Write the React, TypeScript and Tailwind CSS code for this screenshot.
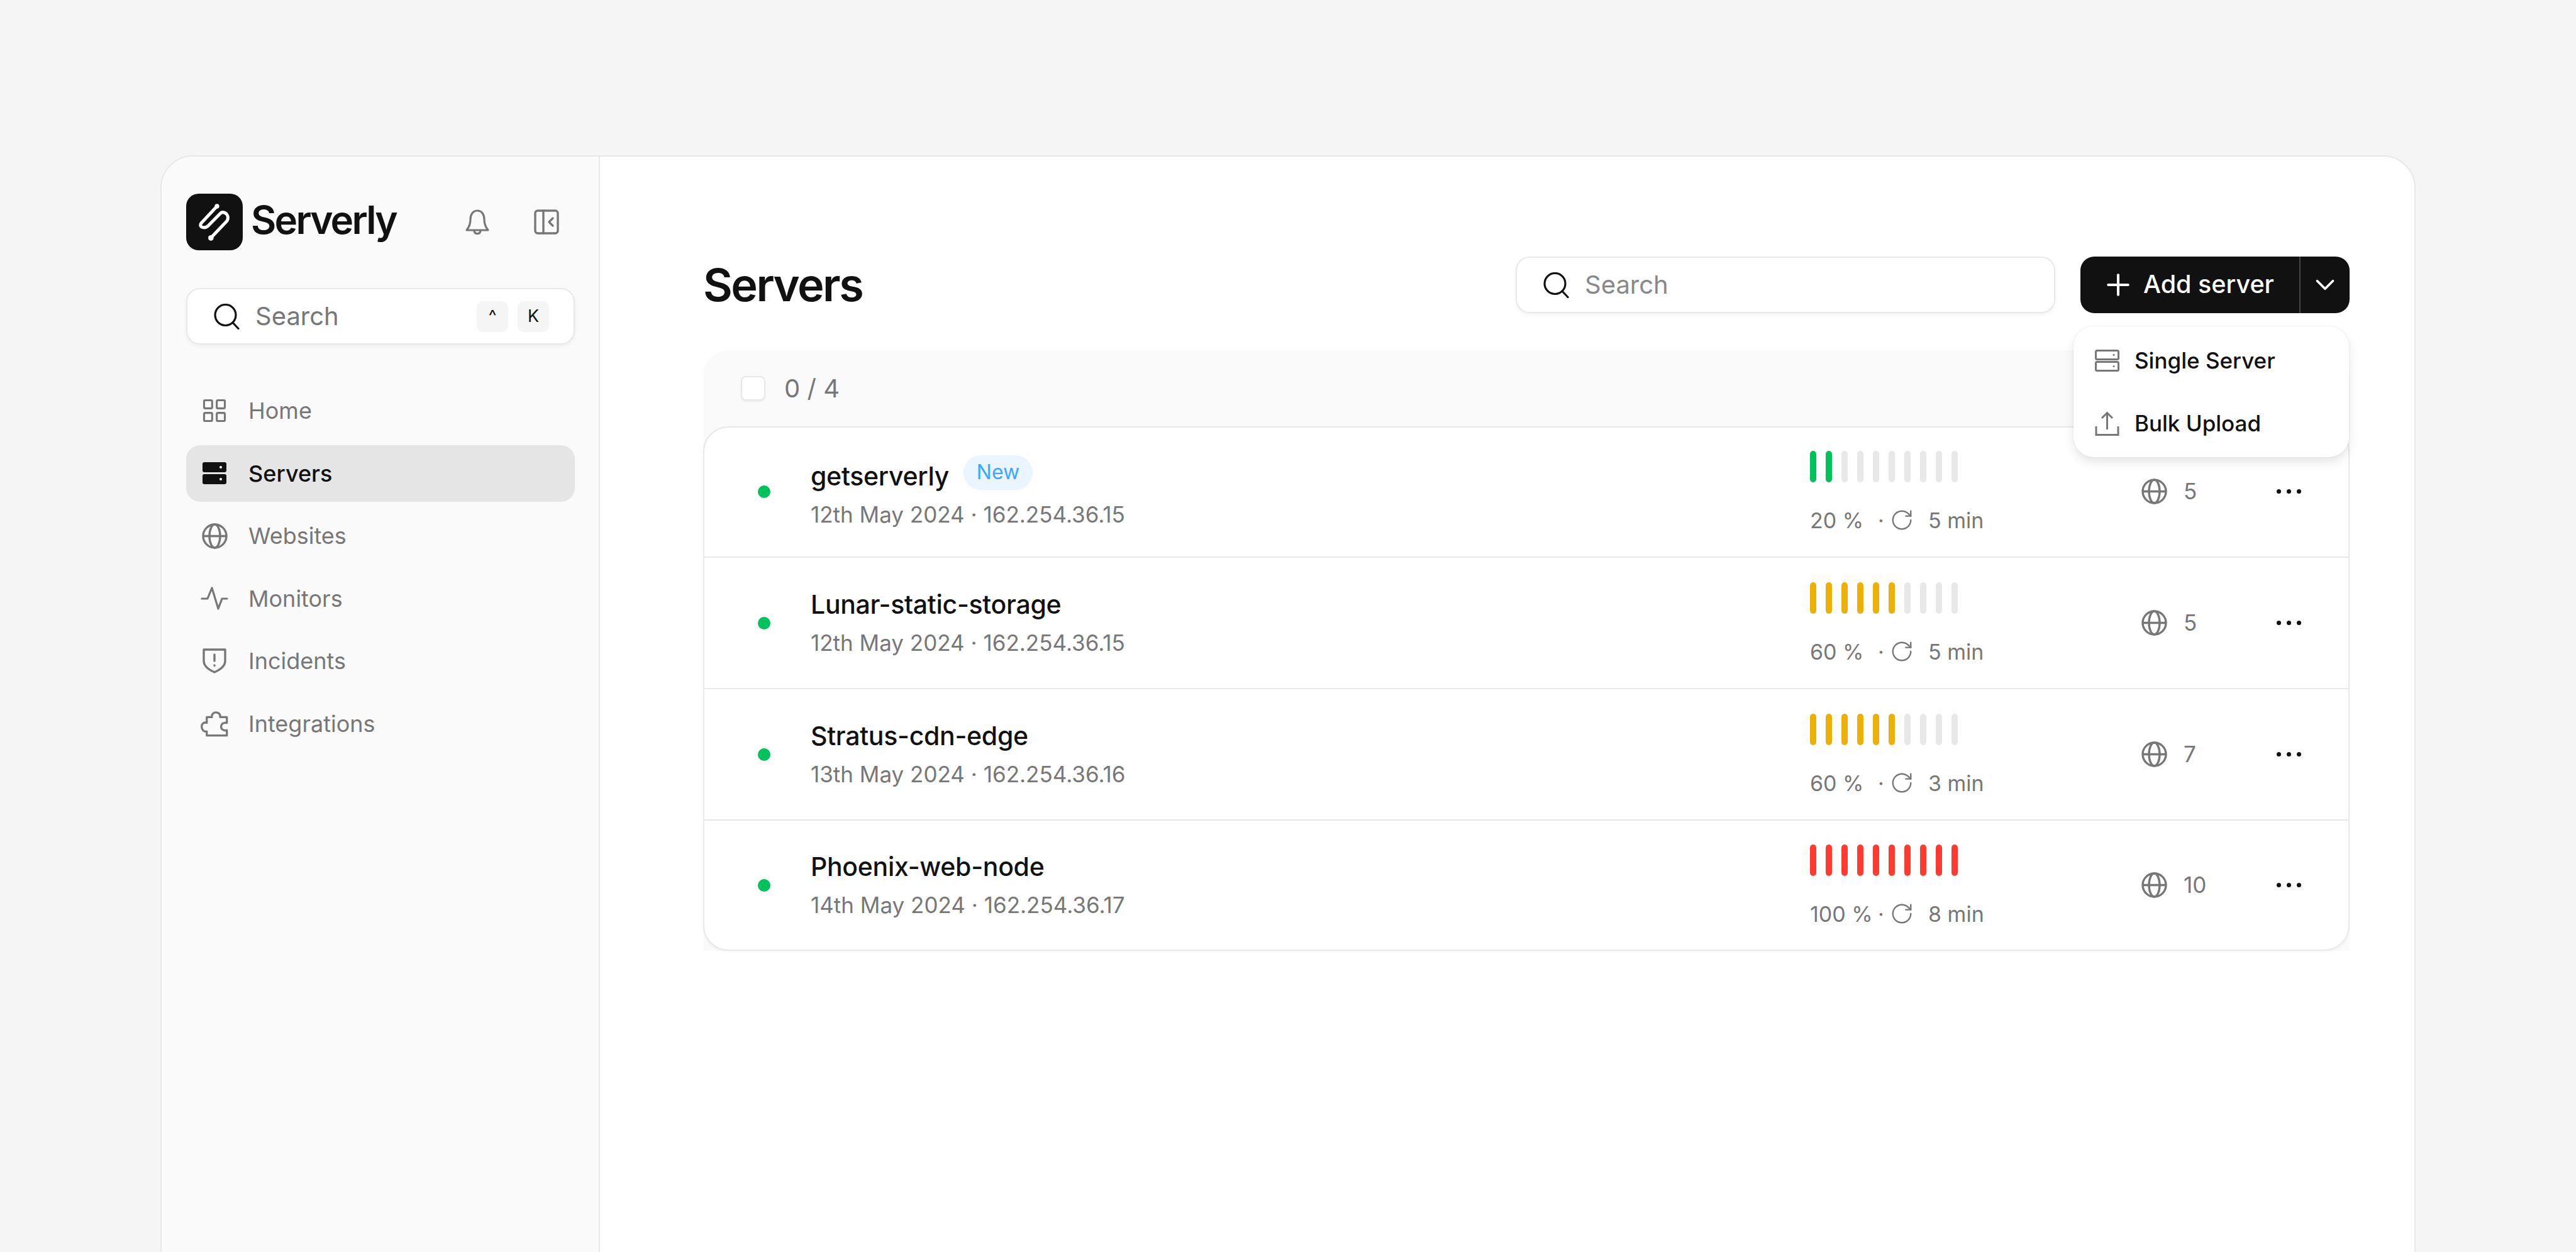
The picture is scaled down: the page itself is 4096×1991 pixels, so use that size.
import { Fragment } from "react";
import { ChevronDown, LayoutGrid, Plus, RotateCw } from "lucide-react";

const font = { fontFamily: '"Inter", "Noto Sans", sans-serif' };

const SearchIcon = ({ className }: { className?: string }) => (
  <svg viewBox="0 0 41 41" fill="none" stroke="#111" strokeWidth="3.2" strokeLinecap="round" className={className}>
    <circle cx="18.5" cy="18" r="16.5" />
    <path d="M30 30l9 9.5" />
  </svg>
);

const GlobeIcon = ({ className }: { className?: string }) => (
  <svg viewBox="0 0 41 41" fill="none" stroke="#777" strokeWidth="3.4" className={className}>
    <circle cx="20.5" cy="20.5" r="18.5" />
    <ellipse cx="20.5" cy="20.5" rx="8.5" ry="18.5" />
    <path d="M2 20.5h37" />
  </svg>
);

const Logo = () => (
  <div className="flex h-[90px] w-[90px] shrink-0 items-center justify-center rounded-[20px] bg-[#111]">
    <svg viewBox="0 0 270 270" fill="none" stroke="#fff" strokeWidth="15" strokeLinecap="round" className="h-[90px] w-[90px]">
      <path d="M147 60L72 140Q62 156 80 161Q94 164 106 152L165 92Q178 84 192 96Q205 112 195 130L118 211" />
      <circle cx="147" cy="60" r="11" fill="#fff" stroke="none" />
      <circle cx="118" cy="211" r="13" fill="#fff" stroke="none" />
    </svg>
  </div>
);

const BellIcon = () => (
  <svg viewBox="0 0 38 40" fill="none" stroke="#777" strokeWidth="3.2" strokeLinejoin="round" className="h-[40px] w-[38px]">
    <path d="M8 16C8 8 12 2 19 2S30 8 30 16C30 24 32 28 36 33H2C6 28 8 24 8 16Z" />
    <path d="M14 33C14 37 16 38.5 19 38.5S24 37 24 33" />
  </svg>
);

const PanelIcon = () => (
  <svg viewBox="0 0 40 40" fill="none" stroke="#777" strokeWidth="3.4" strokeLinecap="round" strokeLinejoin="round" className="h-[40px] w-[40px]">
    <rect x="2" y="2" width="36" height="36" rx="4" />
    <path d="M15 2v36" />
    <path d="M30 14l-6 6 6 6" />
  </svg>
);

const ServersFilled = () => (
  <svg viewBox="0 0 38 35" className="h-[35px] w-[38px]">
    <rect x="0" y="0" width="38" height="16" rx="3" fill="#111" />
    <rect x="0" y="19" width="38" height="16" rx="3" fill="#111" />
    <circle cx="29" cy="8" r="2" fill="#fff" />
    <circle cx="29" cy="27" r="2" fill="#fff" />
  </svg>
);

const PulseIcon = () => (
  <svg viewBox="0 0 44 37" fill="none" stroke="#777" strokeWidth="3.2" strokeLinecap="round" strokeLinejoin="round" className="h-[37px] w-[44px]">
    <path d="M2 19h9L18 2l10 33 6-16h8" />
  </svg>
);

const ShieldIcon = () => (
  <svg viewBox="0 0 38 40" fill="none" stroke="#777" strokeWidth="3.4" strokeLinecap="round" strokeLinejoin="round" className="h-[40px] w-[38px]">
    <path d="M2 2H36V20C36 29 28 34 19 38C10 34 2 29 2 20Z" />
    <path d="M19 10V20" />
    <path d="M19 27V27.5" />
  </svg>
);

const PuzzleIcon = () => (
  <svg viewBox="20 320 135 125" fill="none" stroke="#777" strokeWidth="10" strokeLinejoin="round" className="h-[42px] w-[45px]">
    <path d="M50 350H75C72 335 85 327 95 327C108 327 118 337 115 350H148V378C128 375 120 385 120 396C120 408 130 418 148 414V440H50V420C35 422 25 410 25 396C25 384 35 372 50 378Z" />
  </svg>
);

const navItems = [
  { label: "Home", icon: <LayoutGrid size={46} color="#777" strokeWidth={1.7} /> },
  { label: "Servers", icon: <ServersFilled />, active: true },
  { label: "Websites", icon: <GlobeIcon className="h-[41px] w-[41px]" /> },
  { label: "Monitors", icon: <PulseIcon /> },
  { label: "Incidents", icon: <ShieldIcon /> },
  { label: "Integrations", icon: <PuzzleIcon /> },
];

const servers = [
  { name: "getserverly", date: "12th May 2024", ip: "162.254.36.15", pct: 20, mins: 5, sites: 5, isNew: true },
  { name: "Lunar-static-storage", date: "12th May 2024", ip: "162.254.36.15", pct: 60, mins: 5, sites: 5 },
  { name: "Stratus-cdn-edge", date: "13th May 2024", ip: "162.254.36.16", pct: 60, mins: 3, sites: 7 },
  { name: "Phoenix-web-node", date: "14th May 2024", ip: "162.254.36.17", pct: 100, mins: 8, sites: 10 },
];

const barColor = (pct: number) => {
  if (pct >= 100) return "bg-[#ff3b30]";
  if (pct >= 50) return "bg-[#ecb006]";
  return "bg-[#00c25a]";
};

const Usage = ({ pct, mins }: { pct: number; mins: number }) => (
  <div className="flex w-[527px] shrink-0 flex-col gap-[38px] pt-[3px]">
    <div className="flex gap-[15px]">
      {Array.from({ length: 10 }).map((_, i) => (
        <span
          key={i}
          className={`h-[50px] w-[10px] rounded-full ${i < pct / 10 ? barColor(pct) : "bg-[#e8e8e8]"}`}
        />
      ))}
    </div>
    <div className="flex h-[44px] items-center whitespace-nowrap text-[34px] text-[#777]">
      <span className="w-[106px]">{pct} %</span>
      <span className="w-[14px] text-center">·</span>
      <RotateCw size={38} color="#777" strokeWidth={1.5} className="ml-[7px]" />
      <span className="ml-[23px]">{mins} min</span>
    </div>
  </div>
);

const rowClass = (index: number) => {
  if (index === 0) return "h-[205px] pb-[2px]";
  if (index === servers.length - 1) return "h-[207px] border-t-2 border-[#e8e8e8]";
  return "h-[209px] border-t-2 border-[#e8e8e8]";
};

const Row = ({ server, index }: { server: (typeof servers)[number]; index: number }) => (
  <div className={`flex items-center pl-[85px] pr-[74px] ${rowClass(index)}`}>
    <span className="h-[20px] w-[20px] shrink-0 rounded-full bg-[#00c25a]" />
    <div className={`ml-[64px] min-w-0 flex-1 ${index === 0 ? "pt-[10px]" : ""}`}>
      <div className="flex h-[50px] items-center gap-[23px]">
        <span className="text-[41px] font-medium tracking-[-0.3px] text-[#111]">{server.name}</span>
        {server.isNew && (
          <span className="mb-[14px] flex h-[55px] w-[110px] items-center justify-center rounded-full bg-[#eaf5ff] text-[32px] text-[#3ba7ff]">
            New
          </span>
        )}
      </div>
      <div className="mt-[13px] h-[44px] text-[35px] leading-[44px] text-[#777]">
        {server.date} · {server.ip}
      </div>
    </div>
    <Usage pct={server.pct} mins={server.mins} />
    <div className="flex w-[215px] shrink-0 items-center gap-[26px]">
      <GlobeIcon className="h-[41px] w-[41px]" />
      <span className="text-[35px] text-[#777]">{server.sites}</span>
    </div>
    <div className="flex w-[40px] shrink-0 gap-[9px]">
      <span className="h-[7px] w-[7px] rounded-full bg-[#111]" />
      <span className="h-[7px] w-[7px] rounded-full bg-[#111]" />
      <span className="h-[7px] w-[7px] rounded-full bg-[#111]" />
    </div>
  </div>
);

const Sidebar = () => (
  <aside className="w-[697px] shrink-0 border-r-2 border-[#e8e8e8] bg-[#fafafa] pl-[39px] pr-[38px] pt-[59px]">
    <div className="flex h-[90px] items-center">
      <Logo />
      <span className="mb-[7px] ml-[13px] text-[62px] font-semibold tracking-[-2.8px] text-[#111]">Serverly</span>
      <div className="ml-auto mr-[25px] flex items-center gap-[71px]">
        <BellIcon />
        <PanelIcon />
      </div>
    </div>
    <div className="mt-[60px] flex h-[90px] items-center rounded-[22px] border-2 border-[#e8e8e8] bg-white pl-[42px] pr-[39px] shadow-[0_3px_6px_rgba(0,0,0,0.05)]">
      <SearchIcon className="h-[41px] w-[41px]" />
      <span className="ml-[25px] text-[40px] text-[#777]">Search</span>
      <div className="ml-auto flex gap-[15px]">
        <span className="flex h-[49px] w-[50px] items-center justify-center rounded-[10px] bg-[#f5f5f5] text-[27px] text-[#111]">^</span>
        <span className="flex h-[49px] w-[50px] items-center justify-center rounded-[10px] bg-[#f5f5f5] text-[27px] text-[#111]">K</span>
      </div>
    </div>
    <nav className="mt-[60px] flex flex-col gap-[9.6px]">
      {navItems.map((item) => (
        <div
          key={item.label}
          className={`flex h-[90px] items-center rounded-[22px] pl-[23px] text-[36px] ${
            item.active ? "bg-[#e5e5e5] font-medium text-[#111]" : "text-[#777]"
          }`}
        >
          <span className="flex w-[44px] justify-center">{item.icon}</span>
          <span className="ml-[32px]">{item.label}</span>
        </div>
      ))}
    </nav>
  </aside>
);

const AddServer = () => (
  <div className="relative ml-[40px] flex h-[90px] w-[428px] items-center rounded-[22px] bg-[#111] text-white">
    <div className="flex h-full w-[350px] items-center border-r-2 border-[#444] pl-[33px]">
      <Plus size={54} color="#fff" strokeWidth={1.8} className="shrink-0" />
      <span className="ml-[13px] text-[39.5px] font-medium">Add server</span>
    </div>
    <div className="flex flex-1 justify-center">
      <ChevronDown size={50} color="#fff" strokeWidth={1.8} />
    </div>
    <div className="absolute right-[1px] top-[111px] w-[438px] rounded-[32px] bg-white px-[34px] py-[4px] text-[35px] font-medium text-[#111] shadow-[0_0_3px_rgba(0,0,0,0.08),0_8px_16px_rgba(0,0,0,0.1)]">
      {[
        {
          label: "Single Server",
          icon: (
            <svg viewBox="0 0 39 35" fill="none" stroke="#777" strokeWidth="3" className="h-[35px] w-[39px]">
              <rect x="1.5" y="1.5" width="36" height="14" rx="2" />
              <rect x="1.5" y="19.5" width="36" height="14" rx="2" />
              <circle cx="30" cy="8.5" r="1.5" fill="#777" stroke="none" />
              <circle cx="30" cy="26.5" r="1.5" fill="#777" stroke="none" />
            </svg>
          ),
        },
        {
          label: "Bulk Upload",
          icon: (
            <svg viewBox="0 0 39 39" fill="none" stroke="#777" strokeWidth="3" className="h-[39px] w-[39px]">
              <path d="M2 24V37.5H37V24" />
              <path d="M19.5 29V3M11 11l8.5-8.5L28 11" />
            </svg>
          ),
        },
      ].map((opt) => (
        <Fragment key={opt.label}>
          <div className="flex h-[100px] items-center">
            <span className="flex w-[39px] justify-center">{opt.icon}</span>
            <span className="ml-[24px]">{opt.label}</span>
          </div>
        </Fragment>
      ))}
    </div>
  </div>
);

export default function App() {
  return (
    <div style={font} className="h-[1991px] overflow-hidden bg-[#f5f5f5] px-[255px] pt-[247px]">
      <div className="flex h-[1800px] overflow-hidden rounded-t-[52px] border-2 border-[#e8e8e8] bg-white">
        <Sidebar />
        <main className="flex-1 pl-[164px] pr-[103px] pt-[159px]">
          <div className="flex h-[90px] items-center">
            <h1 className="text-[72px] font-semibold tracking-[-2.5px] text-[#111]">Servers</h1>
            <div className="ml-auto flex h-[90px] w-[858px] items-center rounded-[22px] border-2 border-[#e8e8e8] bg-white pl-[42px] shadow-[0_3px_6px_rgba(0,0,0,0.05)]">
              <SearchIcon className="h-[41px] w-[41px]" />
              <span className="ml-[25px] text-[40px] text-[#888]">Search</span>
            </div>
            <AddServer />
          </div>
          <div className="mt-[59px] rounded-t-[40px] bg-[#fafafa]">
            <div className="flex h-[121px] items-center pl-[60px]">
              <span className="h-[39px] w-[39px] rounded-[8px] border-2 border-[#e8e8e8] bg-white shadow-[0_2px_3px_rgba(0,0,0,0.05)]" />
              <span className="ml-[30px] text-[40px] text-[#777]">0 / 4</span>
            </div>
            <div className="rounded-[40px] border-2 border-[#e8e8e8] bg-white shadow-[0_2px_4px_rgba(0,0,0,0.04)]">
              {servers.map((server, i) => (
                <Row key={server.name} server={server} index={i} />
              ))}
            </div>
          </div>
        </main>
      </div>
    </div>
  );
}
